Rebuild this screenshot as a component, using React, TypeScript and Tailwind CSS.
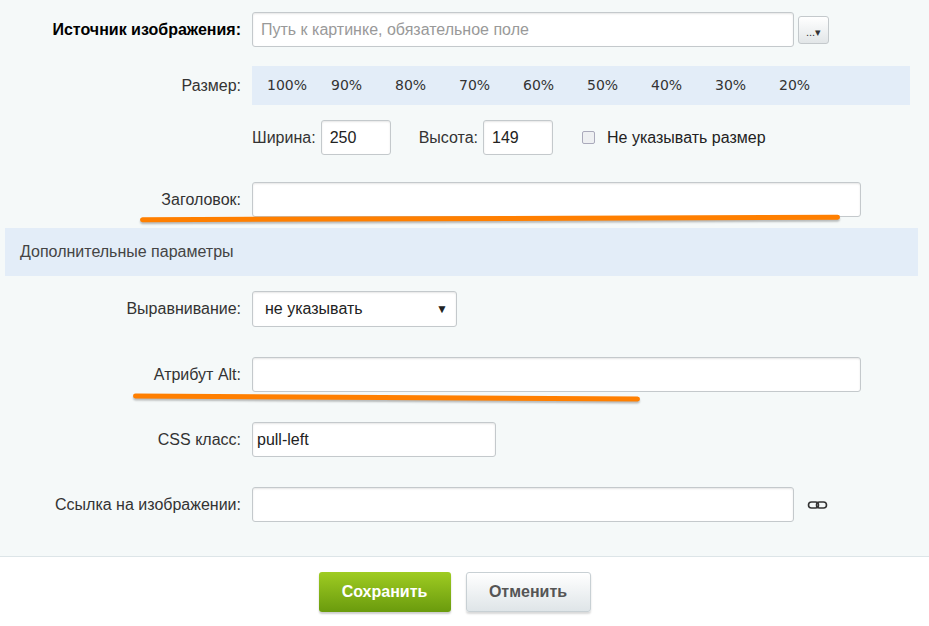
import React from "react";

const inp = "h-[35px] bg-white border border-[#c4c9cc] rounded-[3px] shadow-[inset_0_1px_2px_rgba(0,0,0,0.1)] px-2 flex items-center text-[16px] text-[#222]";

function Row({ label, children, bold, h }: { label: React.ReactNode; children: React.ReactNode; bold?: boolean; h: string }) {
  return (
    <div className={`flex items-center ${h}`}>
      <div className={`w-[241px] text-right shrink-0 text-[16px] ${bold ? "font-bold text-black" : "text-[#333]"}`}>{label}</div>
      <div className="pl-[11px] flex items-center flex-1">{children}</div>
    </div>
  );
}

export default function App() {
  const pcts = ["100%", "90%", "80%", "70%", "60%", "50%", "40%", "30%", "20%"];
  return (
    <div className="w-[929px] h-[626px] bg-white overflow-hidden" style={{ fontFamily: '"Liberation Sans", Arial, sans-serif' }}>
      <div className="bg-[#f5f9f9] h-[557px] border-b border-[#dde5e8] relative pt-[12px]">
        <Row label="Источник изображения:" bold h="h-[35px]">
          <div className={`${inp} w-[542px] text-[#999]`}>Путь к картинке, обязательное поле</div>
          <div className="ml-[4px] w-[31px] h-[28px] bg-gradient-to-b from-white to-[#e2e6e8] border border-[#c4c9cc] rounded-[3px] text-[11px] flex items-end justify-center pb-[2px] text-[#333]">...▾</div>
        </Row>
        <div className="h-[19px]" />
        <Row label="Размер:" h="h-[39px]">
          <div className="w-[658px] h-[39px] bg-[#e3edf8] flex items-center pl-[15px] gap-[29px] text-[14px] text-[#333]" style={{ fontFamily: '"DejaVu Sans", sans-serif' }}>
            {pcts.map((p) => <span key={p} className="w-[35px]">{p}</span>)}
          </div>
        </Row>
        <div className="h-[15px]" />
        <Row label="" h="h-[35px]">
          <span className="text-[16px] text-[#333] mr-[5px]">Ширина:</span>
          <div className={`${inp} w-[70px]`}>250</div>
          <span className="text-[16px] text-[#333] ml-[28px] mr-[5px]">Высота:</span>
          <div className={`${inp} w-[70px]`}>149</div>
          <div className="ml-[29px] w-[13px] h-[13px] border border-[#aab] rounded-[2px] bg-[#eef0f2]" />
          <span className="ml-[12px] text-[16px] text-[#222]">Не указывать размер</span>
        </Row>
        <div className="h-[27px]" />
        <Row label="Заголовок:" h="h-[35px]">
          <div className={`${inp} w-[609px]`} />
        </Row>
        <div className="absolute left-[140px] top-[216px] w-[700px] h-[5px] bg-[#ff7f00] rounded-full -rotate-[0.2deg] shadow-[0_2px_2px_rgba(0,0,0,0.25)]" />
        <div className="h-[11px]" />
        <div className="mx-[5px] w-[913px] h-[48px] bg-[#e3edf8] flex items-center pl-[15px] text-[16px] text-[#444]">Дополнительные параметры</div>
        <div className="h-[15px]" />
        <Row label="Выравнивание:" h="h-[36px]">
          <div className={`${inp} h-[36px] w-[205px] justify-between pl-[12px]`}>
            <span>не указывать</span><span className="text-[12px]">▼</span>
          </div>
        </Row>
        <div className="h-[30px]" />
        <Row label="Атрибут Alt:" h="h-[35px]">
          <div className={`${inp} w-[609px]`} />
        </Row>
        <div className="absolute left-[133px] top-[395px] w-[507px] h-[5px] bg-[#ff7f00] rounded-full rotate-[0.35deg] shadow-[0_2px_2px_rgba(0,0,0,0.25)]" />
        <div className="h-[30px]" />
        <Row label="CSS класс:" h="h-[35px]">
          <div className={`${inp} w-[244px] pl-[4px]`}>pull-left</div>
        </Row>
        <div className="h-[30px]" />
        <Row label="Ссылка на изображении:" h="h-[35px]">
          <div className={`${inp} w-[542px]`} />
          <svg className="ml-[13px]" width="22" height="10" viewBox="0 0 22 10">
            <rect x="1.5" y="2" width="10" height="6" rx="3" fill="none" stroke="#333" strokeWidth="1.6" />
            <rect x="9.5" y="2" width="10" height="6" rx="3" fill="none" stroke="#333" strokeWidth="1.6" />
          </svg>
        </Row>
      </div>
      <div className="flex justify-center gap-[15px] pt-[15px] pr-[20px]">
        <div className="w-[132px] h-[40px] rounded-[3px] bg-gradient-to-b from-[#9fcc22] to-[#6a9b0d] text-white font-bold text-[16px] flex items-center justify-center shadow-[0_2px_2px_rgba(0,0,0,0.2)]">Сохранить</div>
        <div className="w-[125px] h-[40px] rounded-[3px] bg-gradient-to-b from-white to-[#dfe5e8] border border-[#c8d0d4] text-[#555] font-bold text-[16px] flex items-center justify-center shadow-[0_2px_2px_rgba(0,0,0,0.15)]">Отменить</div>
      </div>
    </div>
  );
}
